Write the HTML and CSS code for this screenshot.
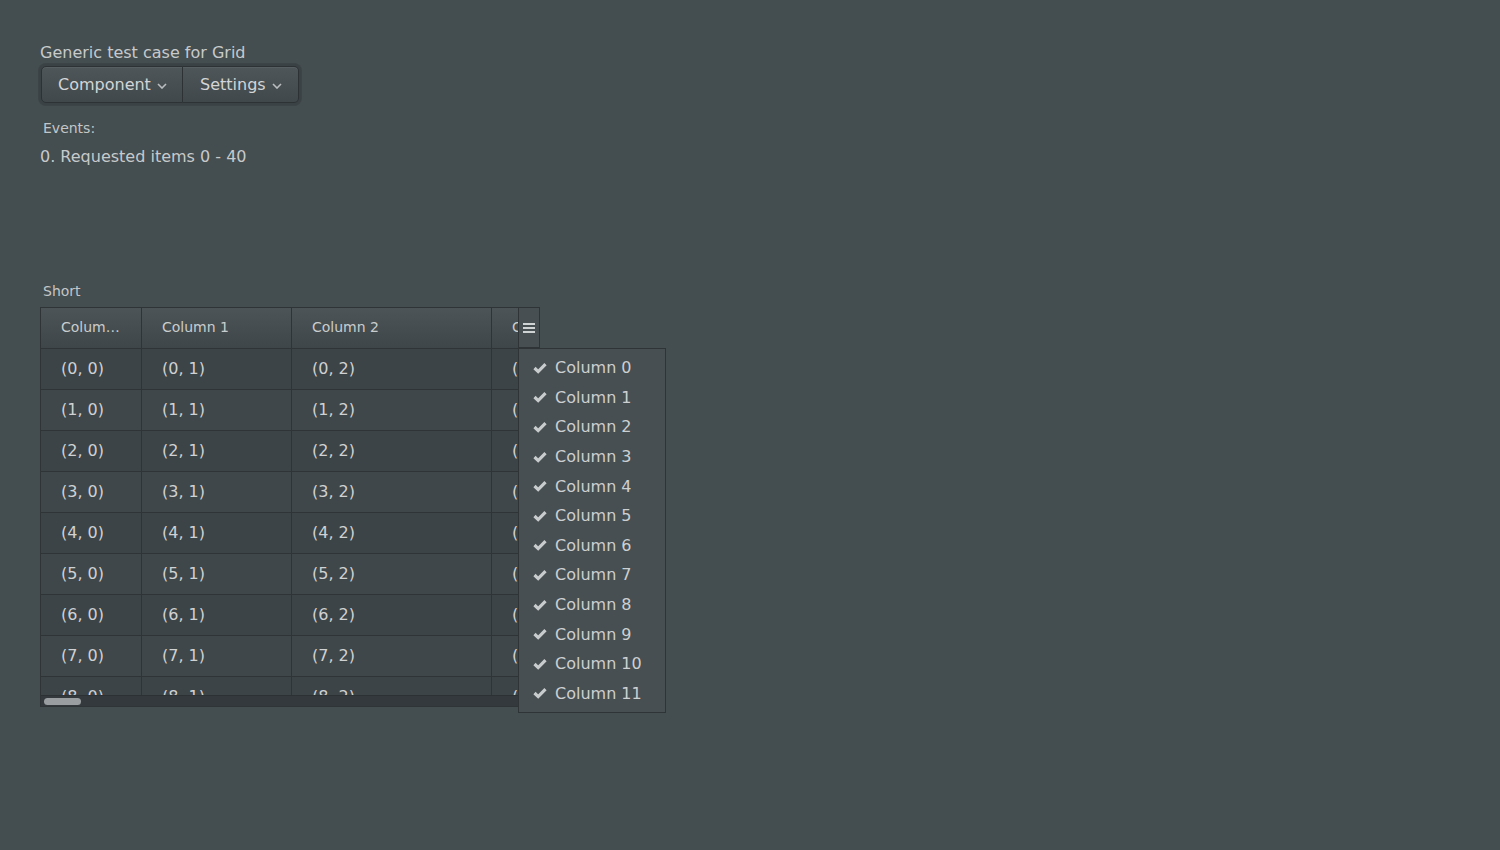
FILE: index.html
```html
<!DOCTYPE html>
<html>
<head>
<meta charset="utf-8">
<link rel="stylesheet" href="styles.css">
</head>
<body>
<div class="page">
  <div class="caption">Generic test case for Grid</div>
  <div class="menubar">
    <div class="mitem">Component<svg class="chev" width="10" height="6" viewBox="0 0 10 6"><polyline points="1,1 5,5 9,1" fill="none" stroke="#b9bdbf" stroke-width="1.6"/></svg></div>
    <div class="mitem">Settings<svg class="chev" width="10" height="6" viewBox="0 0 10 6"><polyline points="1,1 5,5 9,1" fill="none" stroke="#b9bdbf" stroke-width="1.6"/></svg></div>
  </div>
  <div class="small-cap events">Events:</div>
  <div class="log">0. Requested items 0 - 40</div>
  <div class="small-cap short">Short</div>
  <div class="grid-wrap">
    <div class="grid">
      <div class="row head">
        <div class="cell c0">Column 0</div><div class="cell c1">Column 1</div><div class="cell c2">Column 2</div><div class="cell c3">Column 3</div>
      </div>
      <div class="body" id="body"></div>
      <div class="hscroll"><div class="thumb"></div></div>
    </div>
    <div class="sidebar-btn"><svg width="12" height="10" viewBox="0 0 12 10"><rect x="0" y="0" width="12" height="2" fill="#d0d3d4"/><rect x="0" y="4" width="12" height="2" fill="#d0d3d4"/><rect x="0" y="8" width="12" height="2" fill="#d0d3d4"/></svg></div>
    <div class="popup" id="popup"></div>
  </div>
</div>
<script>
  var body = document.getElementById('body');
  for (var r = 0; r < 9; r++) {
    var row = document.createElement('div');
    row.className = 'row ' + (r % 2 ? 'odd' : 'even');
    for (var c = 0; c < 4; c++) {
      var cell = document.createElement('div');
      cell.className = 'cell c' + c;
      cell.textContent = '(' + r + ', ' + c + ')';
      row.appendChild(cell);
    }
    body.appendChild(row);
  }
  var popup = document.getElementById('popup');
  for (var i = 0; i < 12; i++) {
    var it = document.createElement('div');
    it.className = 'pitem';
    it.innerHTML = '<svg class="check" width="14" height="12" viewBox="0 0 14 12"><polyline points="1.5,6 5.2,9.6 12.5,2.2" fill="none" stroke="#c9cccd" stroke-width="3.2"/></svg><span>Column ' + i + '</span>';
    popup.appendChild(it);
  }
</script>
</body>
</html>
```

FILE: styles.css
```css
html, body {
  margin: 0;
  padding: 0;
  background: #444d50;
  font-family: "DejaVu Sans", sans-serif;
  color: #c7cacb;
}
.page {
  padding: 43px 0 0 40px;
  min-height: 850px;
  box-sizing: border-box;
}
.caption {
  font-size: 16px;
  line-height: 20px;
  height: 20px;
}
.menubar {
  display: inline-flex;
  margin-top: 1px;
  margin-left: -1px;
  padding: 2px;
  border-radius: 7px;
  background: #3b4245;
  box-shadow: 0 0 0 1px #3d4447;
}
.mitem {
  display: flex;
  align-items: center;
  height: 37px;
  box-sizing: border-box;
  font-size: 16px;
  color: #d3d5d6;
  background: linear-gradient(#4e5659, #41484b);
  border: 1px solid #2d3235;
  box-shadow: inset 0 1px 0 #575f62;
}
.mitem:first-child {
  padding: 0 14px 0 16px;
  border-radius: 5px 0 0 5px;
  width: 142px;
}
.mitem:last-child {
  padding: 0 14px 0 17px;
  border-left: none;
  border-radius: 0 5px 5px 0;
  width: 116px;
}
.chev {
  margin-left: 6px;
  margin-top: 3px;
}
.small-cap {
  font-size: 14px;
  line-height: 18px;
  margin-left: 3px;
  color: #c3c6c7;
}
.events {
  margin-top: 14px;
}
.log {
  font-size: 16px;
  line-height: 20px;
  margin-top: 10px;
}
.short {
  margin-top: 115px;
}
.grid-wrap {
  position: relative;
  margin-top: 7px;
  width: 500px;
}
.grid {
  width: 500px;
  height: 400px;
  box-sizing: border-box;
  border: 1px solid #2f3537;
  overflow: hidden;
  background: #3d4447;
}
.row {
  display: flex;
  height: 41px;
  box-sizing: border-box;
  border-bottom: 1px solid #2f3537;
  white-space: nowrap;
}
.row.head {
  background: linear-gradient(#4c5457, #3f4649);
  font-size: 14px;
  color: #c9cccd;
}
.row.even { background: #3d4447; }
.row.odd { background: #40474a; }
.cell {
  flex: none;
  box-sizing: border-box;
  padding: 0 20px;
  line-height: 40px;
  font-size: 16px;
  color: #cfd1d2;
  overflow: hidden;
  text-overflow: ellipsis;
  border-right: 1px solid #2f3537;
}
.head .cell {
  font-size: 14px;
  line-height: 39px;
  color: #c9cccd;
}
.c0 { width: 101px; }
.c1 { width: 150px; }
.c2 { width: 200px; }
.c3 { width: 200px; }
.body {
  height: 346px;
  overflow: hidden;
}
.hscroll {
  height: 12px;
  background: #33393c;
  position: relative;
  border-top: 1px solid #2c3133;
}
.thumb {
  position: absolute;
  left: 3px;
  top: 2px;
  width: 37px;
  height: 7px;
  border-radius: 4px;
  background: #9a9ea0;
}
.sidebar-btn {
  position: absolute;
  left: 478px;
  top: 0;
  width: 21px;
  height: 41px;
  box-sizing: border-box;
  border-left: 1px solid #2f3537;
  border-top: 1px solid #2f3537;
  border-bottom: 1px solid #2f3537;
  background: #474f52;
  display: flex;
  align-items: center;
  justify-content: center;
  padding-top: 0;
}
.popup {
  position: absolute;
  left: 478px;
  top: 41px;
  width: 148px;
  box-sizing: border-box;
  padding: 4px 0;
  background: #474f52;
  border: 1px solid #2f3537;
  z-index: 2;
}
.pitem {
  display: flex;
  align-items: center;
  height: 29.6px;
  padding-left: 14px;
  font-size: 16px;
  color: #cdd0d1;
}
.check {
  margin-right: 8px;
}
```
